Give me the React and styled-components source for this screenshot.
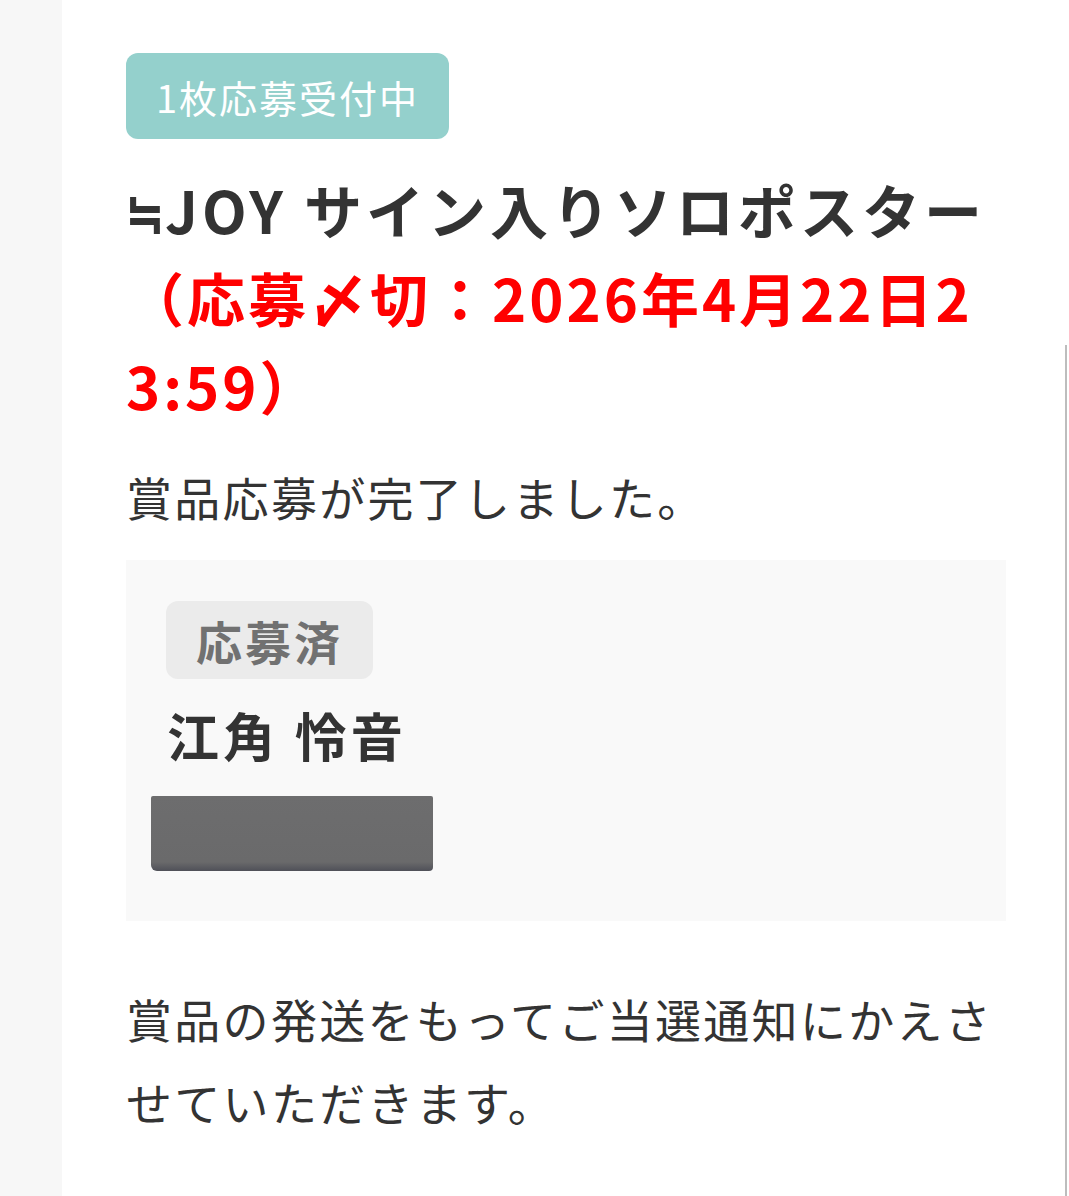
import React from 'react'
import styled, { createGlobalStyle } from 'styled-components'

const GlobalStyle = createGlobalStyle`
  html, body {
    margin: 0;
    padding: 0;
    background: #fff;
  }
  body {
    font-family: "Noto Sans CJK JP", "Noto Sans", sans-serif;
    color: #333;
  }
  * { box-sizing: border-box; }
`

const Page = styled.div`
  display: flex;
  min-height: 1196px;
`

const SideStrip = styled.div`
  width: 62px;
  flex-shrink: 0;
  background: #f7f7f7;
`

const Main = styled.main`
  flex: 1;
  padding: 53px 63px 40px 64px;
  background: #fff;
`

const ScrollTrack = styled.div`
  position: fixed;
  top: 345px;
  right: 2px;
  bottom: 0;
  width: 2px;
  background: #bdbdbd;
`

const Status = styled.span`
  display: inline-flex;
  align-items: center;
  height: 86px;
  padding: 0 30px;
  border-radius: 12px;
  background: #94d0cc;
  color: #fff;
  font-size: 38px;
  letter-spacing: 2px;
  font-weight: 400;
`

const Title = styled.h1`
  margin: 26px 0 0;
  font-size: 58px;
  line-height: 88px;
  font-weight: 700;
  letter-spacing: 4px;
  color: #333;
  word-break: break-all;
`

/* the ≒ of the group name is drawn narrower than a full-width glyph */
const Mark = styled.span`
  display: inline-block;
  letter-spacing: 0;
  transform: scaleX(0.78);
  transform-origin: left center;
  margin-right: -10px;
`

const Deadline = styled.span`
  display: block;
  color: #f00;
  letter-spacing: 3px;
`

const Text = styled.p`
  margin: ${p => p.$top || 0}px 0 0;
  font-size: 46px;
  line-height: 83px;
  letter-spacing: 2.3px;
  font-weight: 400;
  color: #333;
`

const EntryCard = styled.section`
  margin-top: 22px;
  padding: 41px 40px 50px;
  background: #f9f9f9;
  display: flex;
  flex-direction: column;
  align-items: flex-start;
`

const DoneTag = styled.span`
  display: inline-flex;
  align-items: center;
  height: 78px;
  padding: 0 30px;
  border-radius: 12px;
  background: #ebebeb;
  color: #717171;
  font-size: 46px;
  font-weight: 700;
  letter-spacing: 3px;
`

const Name = styled.div`
  margin-top: 25px;
  padding-left: 1px;
  font-size: 52px;
  line-height: 62px;
  font-weight: 700;
  letter-spacing: 4px;
  color: #333;
`

const Redacted = styled.div`
  margin: 30px 0 0 -15px;
  width: 282px;
  height: 75px;
  border-radius: 2px 2px 4px 6px;
  background: linear-gradient(180deg, #6d6d6e 0%, #6a6a6b 88%, #4f5058 100%);
`

export default function App() {
  return (
    <>
      <GlobalStyle />
      <Page>
        <SideStrip />
        <Main>
          <Status>1枚応募受付中</Status>
          <Title>
            <Mark>≒</Mark>JOY サイン入りソロポスター
            <Deadline>（応募〆切：2026年4月22日23:59）</Deadline>
          </Title>
          <Text $top={26}>賞品応募が完了しました。</Text>
          <EntryCard>
            <DoneTag>応募済</DoneTag>
            <Name>江角 怜音</Name>
            <Redacted />
          </EntryCard>
          <Text $top={56}>賞品の発送をもってご当選通知にかえさせていただきます。</Text>
        </Main>
      </Page>
      <ScrollTrack />
    </>
  )
}
